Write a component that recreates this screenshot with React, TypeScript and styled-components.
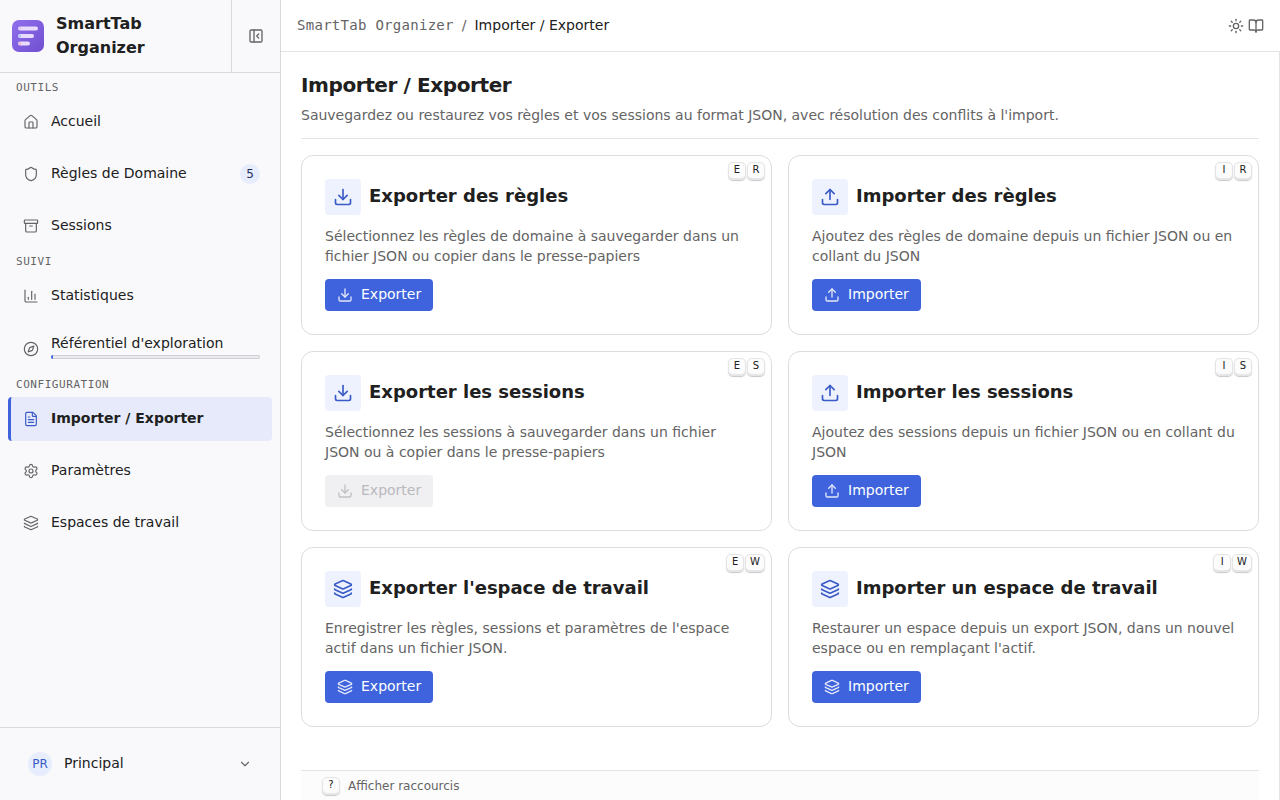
import React from 'react';
import styled, { createGlobalStyle, css } from 'styled-components';
import {
  Archive,
  BookOpen,
  ChartColumn,
  ChevronDown,
  Compass,
  Download,
  FileText,
  House,
  Layers,
  PanelLeftClose,
  Settings,
  Shield,
  Sun,
  Upload,
  type LucideIcon,
} from 'lucide-react';

const color = {
  text: '#202020',
  muted: '#646464',
  border: '#d9d9dc',
  line: '#e4e4e6',
  accent: '#3e63dd',
  accentText: '#3a5bc7',
  accentSoft: '#edf2fe',
  sidebar: '#f9f9fc',
};

const mono = '"DejaVu Sans Mono", monospace';

const GlobalStyle = createGlobalStyle`
  *, *::before, *::after { box-sizing: border-box; }
  body {
    margin: 0;
    background: #fff;
    color: ${color.text};
    font: 14px/20px "DejaVu Sans", sans-serif;
  }
  button { font: inherit; color: inherit; }
  h1, h2, p, ul { margin: 0; padding: 0; }
  svg { display: block; flex: none; }
`;

const Shell = styled.div`
  display: grid;
  grid-template-columns: 281px minmax(0, 1fr);
  height: 100vh;
`;

const Sidebar = styled.aside`
  display: flex;
  flex-direction: column;
  min-height: 0;
  background: ${color.sidebar};
  border-right: 1px solid ${color.border};
`;

const SidebarHeader = styled.div`
  display: flex;
  flex: none;
  border-bottom: 1px solid ${color.border};
`;

const Brand = styled.div`
  display: flex;
  flex: 1;
  align-items: center;
  gap: 12px;
  padding: 12px;
  font-size: 16px;
  line-height: 24px;
  font-weight: 700;
`;

const CollapseButton = styled.button`
  display: grid;
  place-items: center;
  width: 49px;
  padding: 0;
  border: 0;
  border-left: 1px solid ${color.border};
  background: none;
  color: ${color.muted};
`;

const Nav = styled.nav`
  flex: 1;
  min-height: 0;
  overflow: auto;
  padding: 1px 8px 0;
`;

const NavLabel = styled.h2`
  padding: 6px 8px 4px;
  color: ${color.muted};
  font: 400 11px/16px ${mono};
  letter-spacing: 0.05em;
  text-transform: uppercase;
`;

const NavList = styled.ul`
  display: flex;
  flex-direction: column;
  gap: 8px;
  list-style: none;
`;

const NavLink = styled.a<{ $active?: boolean }>`
  display: flex;
  align-items: center;
  gap: 12px;
  min-height: 44px;
  padding: 7px 12px;
  border-left: 3px solid transparent;
  border-radius: 4px;
  color: ${color.text};
  text-decoration: none;

  svg { color: ${color.muted}; }

  ${({ $active }) =>
    $active &&
    css`
      background: #e7eafa;
      border-left-color: ${color.accent};
      font-weight: 700;
      svg { color: ${color.accentText}; }
    `}
`;

const NavText = styled.span`
  flex: 1;
  padding-bottom: 2px;
`;

const NavStack = styled.span`
  display: flex;
  flex: 1;
  flex-direction: column;
  gap: 2px;
  padding-bottom: 5px;
`;

const Progress = styled.span`
  height: 4px;
  overflow: hidden;
  border-radius: 2px;
  background: #ebebef;
  box-shadow: inset 0 0 0 1px #cfcfd6;
`;

const ProgressFill = styled.span`
  display: block;
  height: 100%;
  background: ${color.accent};
`;

const CountBadge = styled.span`
  display: grid;
  place-items: center;
  width: 20px;
  height: 20px;
  border-radius: 50%;
  background: #e8edfd;
  color: #1f2d5c;
  font-size: 12px;
`;

const SidebarFooter = styled.div`
  flex: none;
  padding: 12px 16px;
  border-top: 1px solid ${color.border};
`;

const WorkspaceButton = styled.button`
  display: flex;
  align-items: center;
  gap: 12px;
  width: 100%;
  height: 48px;
  padding: 0 12px;
  border: 0;
  background: none;
  text-align: left;

  > svg { color: ${color.muted}; }
`;

const Avatar = styled.span`
  display: grid;
  place-items: center;
  width: 24px;
  height: 24px;
  border-radius: 50%;
  background: #e8edfd;
  color: ${color.accentText};
  font-size: 12px;
`;

const Content = styled.div`
  display: flex;
  flex-direction: column;
  min-width: 0;
  min-height: 0;
`;

const TopBar = styled.header`
  display: flex;
  flex: none;
  align-items: center;
  justify-content: space-between;
  height: 52px;
  padding: 0 16px;
  border-bottom: 1px solid ${color.line};
`;

const Breadcrumb = styled.nav`
  display: flex;
  gap: 8px;
  padding-bottom: 2px;
  color: ${color.muted};
`;

const BreadcrumbRoot = styled.a`
  color: inherit;
  font-family: ${mono};
  letter-spacing: 0.02em;
  text-decoration: none;
`;

const BreadcrumbCurrent = styled.span`
  color: ${color.text};
`;

const TopActions = styled.div`
  display: flex;
  gap: 4px;
`;

const IconButton = styled.button`
  display: grid;
  place-items: center;
  padding: 0;
  border: 0;
  background: none;
  color: ${color.muted};
`;

const Main = styled.main`
  display: flex;
  flex: 1;
  flex-direction: column;
  min-height: 0;
  overflow: auto;
  padding: 20px 20px 0;
  border-right: 1px solid ${color.line};
`;

const PageHeader = styled.div`
  display: flex;
  flex-direction: column;
  gap: 7px;
  padding-bottom: 13px;
  margin-bottom: 16px;
  border-bottom: 1px solid ${color.line};
`;

const PageTitle = styled.h1`
  font-size: 20px;
  line-height: 26px;
  font-weight: 700;
  letter-spacing: -0.02em;
`;

const PageIntro = styled.p`
  color: ${color.muted};
`;

const CardGrid = styled.div`
  display: grid;
  grid-template-columns: repeat(2, minmax(0, 1fr));
  gap: 16px;
`;

const CardBox = styled.section`
  position: relative;
  display: flex;
  flex-direction: column;
  align-items: flex-start;
  gap: 11px;
  padding: 23px;
  border: 1px solid #dddde0;
  border-radius: 12px;
`;

const CardHead = styled.div`
  display: flex;
  align-items: center;
  gap: 8px;
`;

const CardIcon = styled.span`
  display: grid;
  place-items: center;
  width: 36px;
  height: 36px;
  border-radius: 4px;
  background: ${color.accentSoft};
  color: ${color.accentText};
`;

const CardTitle = styled.h2`
  padding-bottom: 2px;
  font-size: 18px;
  line-height: 26px;
  font-weight: 700;
`;

const CardText = styled.p`
  padding-bottom: 2px;
  color: ${color.muted};
`;

const ActionButton = styled.button`
  display: flex;
  align-items: center;
  gap: 8px;
  height: 32px;
  padding: 0 12px;
  border: 0;
  border-radius: 4px;
  background: ${color.accent};
  color: #fff;

  span { padding-bottom: 2px; }
  svg { opacity: 0.85; }

  &:disabled {
    background: #f0f0f2;
    color: #b9b9be;
  }
`;

const Shortcut = styled.div`
  position: absolute;
  top: 6px;
  right: 6px;
  display: flex;
  gap: 1px;
`;

const Key = styled.kbd`
  display: flex;
  justify-content: center;
  min-width: 18px;
  height: 18px;
  padding: 0 5px;
  border-radius: 5px;
  background: #fcfcfc;
  box-shadow:
    inset 0 0 0 1px #e4e4e6,
    inset 0 -2px 1px #e6e6e9,
    0 1px 1px #c8c8cc;
  color: ${color.text};
  font: 10px/16px "DejaVu Sans", sans-serif;
`;

const StatusBar = styled.footer`
  position: sticky;
  bottom: 0;
  display: flex;
  flex: none;
  align-items: center;
  gap: 8px;
  height: 30px;
  margin-top: auto;
  padding: 0 21px;
  border-top: 1px solid ${color.line};
  background: #fcfcfc;
  color: ${color.muted};
  font-size: 12px;
  line-height: 16px;
`;

function Logo() {
  return (
    <svg width="32" height="32" viewBox="0 0 32 32" aria-hidden="true">
      <defs>
        <linearGradient id="logo" x1="0" y1="0" x2="1" y2="1">
          <stop offset="0" stopColor="#8f6fec" />
          <stop offset="1" stopColor="#7050d0" />
        </linearGradient>
      </defs>
      <rect width="32" height="32" rx="7" fill="url(#logo)" />
      <g fill="#e9dcfb">
        <rect x="6" y="6.5" width="20" height="4" rx="2" />
        <rect x="6" y="14" width="16" height="4" rx="2" />
        <rect x="6" y="21.5" width="12" height="4" rx="2" />
      </g>
      <circle cx="8" cy="8.5" r="1.2" fill="#dcc0f5" />
      <circle cx="8" cy="16" r="1.2" fill="#9bc8f5" />
      <circle cx="8" cy="23.5" r="1.2" fill="#f5b0c8" />
    </svg>
  );
}

type NavEntry = {
  label: string;
  icon: LucideIcon;
  count?: number;
  progress?: number;
  active?: boolean;
};

const sections: { title: string; items: NavEntry[] }[] = [
  {
    title: 'Outils',
    items: [
      { label: 'Accueil', icon: House },
      { label: 'Règles de Domaine', icon: Shield, count: 5 },
      { label: 'Sessions', icon: Archive },
    ],
  },
  {
    title: 'Suivi',
    items: [
      { label: 'Statistiques', icon: ChartColumn },
      { label: "Référentiel d'exploration", icon: Compass, progress: 1 },
    ],
  },
  {
    title: 'Configuration',
    items: [
      { label: 'Importer / Exporter', icon: FileText, active: true },
      { label: 'Paramètres', icon: Settings },
      { label: 'Espaces de travail', icon: Layers },
    ],
  },
];

type CardData = {
  title: string;
  text: string;
  action: string;
  icon: LucideIcon;
  keys: string[];
  disabled?: boolean;
};

const cards: CardData[] = [
  {
    title: 'Exporter des règles',
    text: 'Sélectionnez les règles de domaine à sauvegarder dans un fichier JSON ou copier dans le presse-papiers',
    action: 'Exporter',
    icon: Download,
    keys: ['E', 'R'],
  },
  {
    title: 'Importer des règles',
    text: 'Ajoutez des règles de domaine depuis un fichier JSON ou en collant du JSON',
    action: 'Importer',
    icon: Upload,
    keys: ['I', 'R'],
  },
  {
    title: 'Exporter les sessions',
    text: 'Sélectionnez les sessions à sauvegarder dans un fichier JSON ou à copier dans le presse-papiers',
    action: 'Exporter',
    icon: Download,
    keys: ['E', 'S'],
    disabled: true,
  },
  {
    title: 'Importer les sessions',
    text: 'Ajoutez des sessions depuis un fichier JSON ou en collant du JSON',
    action: 'Importer',
    icon: Upload,
    keys: ['I', 'S'],
  },
  {
    title: "Exporter l'espace de travail",
    text: "Enregistrer les règles, sessions et paramètres de l'espace actif dans un fichier JSON.",
    action: 'Exporter',
    icon: Layers,
    keys: ['E', 'W'],
  },
  {
    title: 'Importer un espace de travail',
    text: "Restaurer un espace depuis un export JSON, dans un nouvel espace ou en remplaçant l'actif.",
    action: 'Importer',
    icon: Layers,
    keys: ['I', 'W'],
  },
];

function NavItem({ label, icon: Icon, count, progress, active }: NavEntry) {
  return (
    <li>
      <NavLink href="#" $active={active} aria-current={active ? 'page' : undefined}>
        <Icon size={16} strokeWidth={1.75} />
        {progress === undefined ? (
          <NavText>{label}</NavText>
        ) : (
          <NavStack>
            <span>{label}</span>
            <Progress>
              <ProgressFill style={{ width: `${progress}%` }} />
            </Progress>
          </NavStack>
        )}
        {count !== undefined && <CountBadge>{count}</CountBadge>}
      </NavLink>
    </li>
  );
}

function Card({ title, text, action, icon: Icon, keys, disabled }: CardData) {
  return (
    <CardBox>
      <CardHead>
        <CardIcon>
          <Icon size={20} />
        </CardIcon>
        <CardTitle>{title}</CardTitle>
      </CardHead>
      <CardText>{text}</CardText>
      <ActionButton type="button" disabled={disabled}>
        <Icon size={16} />
        <span>{action}</span>
      </ActionButton>
      <Shortcut>
        {keys.map((key) => (
          <Key key={key}>{key}</Key>
        ))}
      </Shortcut>
    </CardBox>
  );
}

export default function App() {
  return (
    <>
      <GlobalStyle />
      <Shell>
        <Sidebar>
          <SidebarHeader>
            <Brand>
              <Logo />
              <span>SmartTab Organizer</span>
            </Brand>
            <CollapseButton type="button" aria-label="Réduire le menu">
              <PanelLeftClose size={16} />
            </CollapseButton>
          </SidebarHeader>
          <Nav>
            {sections.map((section) => (
              <React.Fragment key={section.title}>
                <NavLabel>{section.title}</NavLabel>
                <NavList>
                  {section.items.map((item) => (
                    <NavItem key={item.label} {...item} />
                  ))}
                </NavList>
              </React.Fragment>
            ))}
          </Nav>
          <SidebarFooter>
            <WorkspaceButton type="button">
              <Avatar>PR</Avatar>
              <NavText>Principal</NavText>
              <ChevronDown size={14} />
            </WorkspaceButton>
          </SidebarFooter>
        </Sidebar>
        <Content>
          <TopBar>
            <Breadcrumb>
              <BreadcrumbRoot href="#">SmartTab Organizer</BreadcrumbRoot>
              <span>/</span>
              <BreadcrumbCurrent>Importer / Exporter</BreadcrumbCurrent>
            </Breadcrumb>
            <TopActions>
              <IconButton type="button" aria-label="Thème">
                <Sun size={16} />
              </IconButton>
              <IconButton type="button" aria-label="Documentation">
                <BookOpen size={16} />
              </IconButton>
            </TopActions>
          </TopBar>
          <Main>
            <PageHeader>
              <PageTitle>Importer / Exporter</PageTitle>
              <PageIntro>
                Sauvegardez ou restaurez vos règles et vos sessions au format JSON, avec résolution
                des conflits à l'import.
              </PageIntro>
            </PageHeader>
            <CardGrid>
              {cards.map((card) => (
                <Card key={card.title} {...card} />
              ))}
            </CardGrid>
            <StatusBar>
              <Key>?</Key>
              <span>Afficher raccourcis</span>
            </StatusBar>
          </Main>
        </Content>
      </Shell>
    </>
  );
}
